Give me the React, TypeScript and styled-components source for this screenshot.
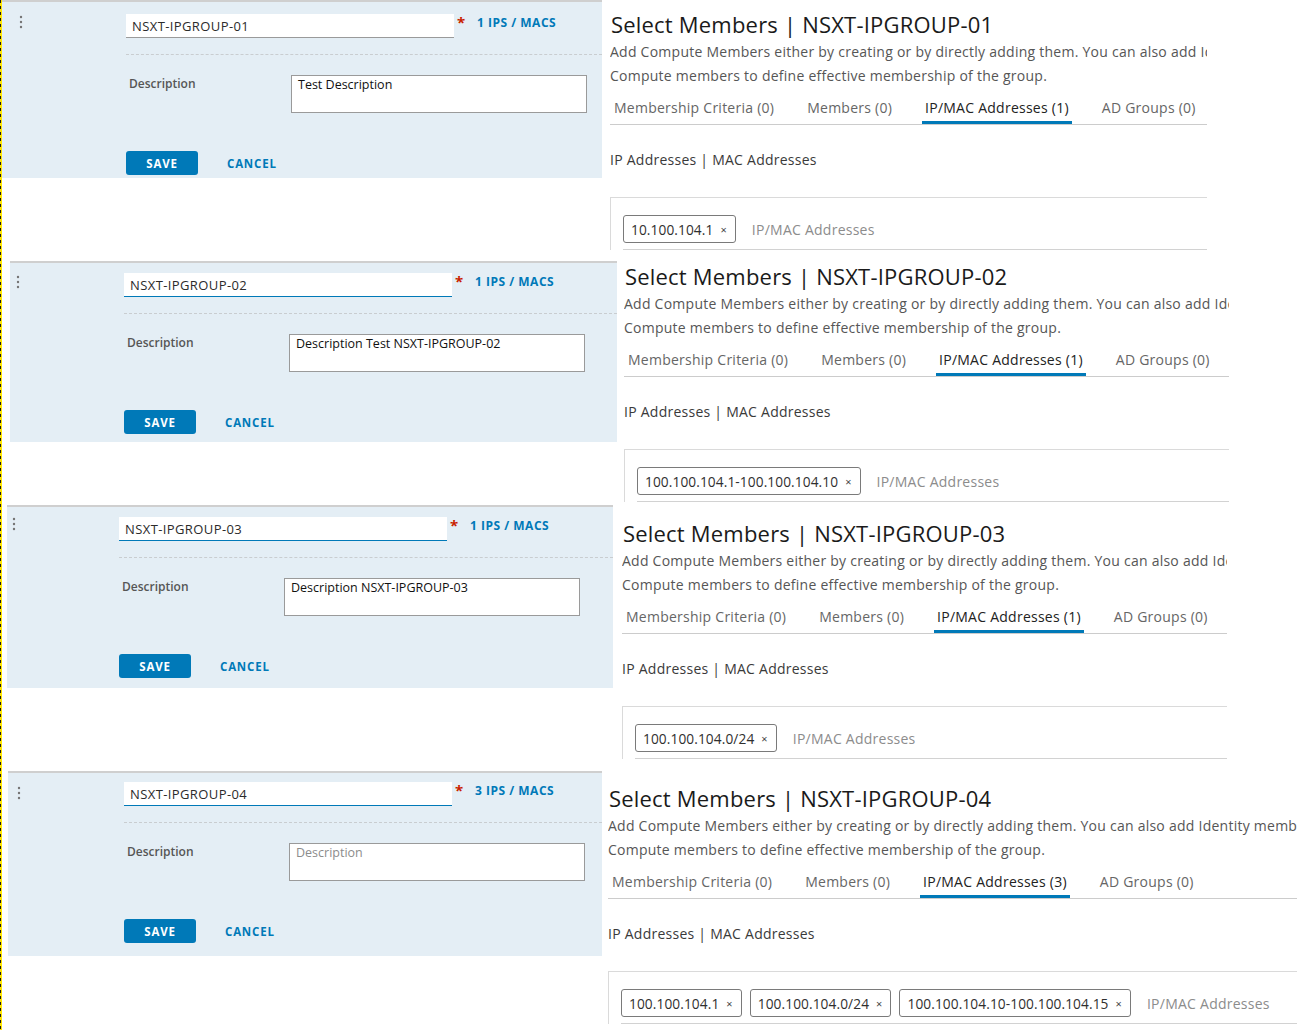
import React from "react";
import styled, { createGlobalStyle } from "styled-components";

const FONT = `"Open Sans", "Noto Sans", sans-serif`;
const BLUE = "#0079b8";

const Global = createGlobalStyle`
  html, body { margin: 0; padding: 0; background: #fff; overflow: hidden; }
  body { font-family: ${FONT}; }
  * { box-sizing: border-box; }
`;

const Page = styled.div`
  width: 1297px;
  height: 1030px;
  overflow: hidden;
  display: flex;
  flex-direction: column;
`;

const EdgeMarker = styled.div`
  position: fixed;
  left: 0;
  top: 0;
  width: 2px;
  height: 100%;
  background: repeating-linear-gradient(to bottom, #1a1a1a 0 3px, #ffe600 3px 6px);
  border-right: 1px solid #ffe600;
  z-index: 5;
`;

const Row = styled.div<{ $h: number }>`
  height: ${(p) => p.$h}px;
  flex: none;
  display: flex;
  align-items: flex-start;
  overflow: hidden;
`;

const EditPanel = styled.div<{ $x: number; $mt: number; $w: number; $h: number }>`
  margin-left: ${(p) => p.$x}px;
  margin-top: ${(p) => p.$mt}px;
  width: ${(p) => p.$w}px;
  height: ${(p) => p.$h}px;
  flex: none;
  background: #e4eef5;
  border-top: 2px solid #cfcfcf;
  display: flex;
`;

const KebabCell = styled.div<{ $w: number; $l: number; $t: number }>`
  width: ${(p) => p.$w}px;
  flex: none;
  padding-left: ${(p) => p.$l}px;
  padding-top: ${(p) => p.$t}px;
  color: #747474;
  line-height: 0;
`;

const Form = styled.div<{ $pt: number }>`
  flex: 1;
  min-width: 0;
  padding-top: ${(p) => p.$pt}px;
  display: flex;
  flex-direction: column;
`;

const NameRow = styled.div`
  display: flex;
  align-items: flex-start;
`;

const NameInput = styled.input<{ $focused: boolean }>`
  width: 328px;
  height: 24px;
  flex: none;
  border: none;
  border-bottom: 1px solid ${(p) => (p.$focused ? BLUE : "#9a9a9a")};
  background: #fff;
  padding: 0 0 0 6px;
  font-family: ${FONT};
  font-size: 13px;
  letter-spacing: 0.4px;
  color: #2b2b2b;
  outline: none;
`;

const Required = styled.span`
  margin-left: 3px;
  width: 20px;
  flex: none;
  color: #c92100;
  font-size: 15px;
  font-weight: 700;
  line-height: 14px;
  margin-top: 1px;
`;

const CountLink = styled.span`
  color: ${BLUE};
  font-size: 12px;
  font-weight: 700;
  letter-spacing: 0.5px;
  line-height: 16px;
  margin-top: 1px;
  white-space: nowrap;
`;

const DashedRule = styled.div`
  margin-top: 16px;
  border-top: 1px dashed #c9cdd0;
`;

const DescRow = styled.div`
  margin-top: 20px;
  display: flex;
  align-items: flex-start;
`;

const DescLabel = styled.div`
  width: 165px;
  flex: none;
  padding-left: 3px;
  font-size: 12px;
  font-weight: 600;
  color: #565656;
  line-height: 18px;
`;

const DescArea = styled.textarea`
  width: 296px;
  height: 38px;
  flex: none;
  resize: none;
  border: 1px solid #9a9a9a;
  background: #fff;
  padding: 1px 6px;
  font-family: ${FONT};
  font-size: 12.5px;
  line-height: 16px;
  color: #111;
  outline: none;
  &::placeholder {
    color: #8c8c8c;
  }
`;

const ButtonRow = styled.div`
  margin-top: 38px;
  display: flex;
  align-items: center;
`;

const SaveButton = styled.button`
  width: 72px;
  height: 24px;
  border: none;
  border-radius: 3px;
  background: ${BLUE};
  color: #fff;
  font-family: ${FONT};
  font-size: 11.5px;
  font-weight: 700;
  letter-spacing: 0.8px;
  padding: 0;
`;

const CancelButton = styled.button`
  margin-left: 29px;
  border: none;
  background: transparent;
  padding: 0;
  color: ${BLUE};
  font-family: ${FONT};
  font-size: 11.5px;
  font-weight: 700;
  letter-spacing: 0.8px;
`;

const MembersPanel = styled.div<{ $gap: number; $mt: number; $w: number }>`
  margin-left: ${(p) => p.$gap}px;
  margin-top: ${(p) => p.$mt}px;
  width: ${(p) => p.$w}px;
  flex: none;
  overflow: hidden;
  display: flex;
  flex-direction: column;
  font-size: 14px;
  letter-spacing: 0.25px;
`;

const Title = styled.div`
  margin-top: 10px;
  padding-left: 1px;
  font-size: 22px;
  letter-spacing: 0.2px;
  line-height: 28px;
  color: #1a1a1a;
  white-space: nowrap;
`;

const Lead = styled.div<{ $first?: boolean }>`
  margin-top: ${(p) => (p.$first ? 2 : 0)}px;
  line-height: 24px;
  color: #565656;
  white-space: nowrap;
`;

const TabBar = styled.div`
  display: flex;
  border-bottom: 1px solid #cccccc;
`;

const Tab = styled.div<{ $active: boolean }>`
  padding: 10px 3px 3px;
  margin-right: 27px;
  line-height: 20px;
  white-space: nowrap;
  color: ${(p) => (p.$active ? "#222" : "#666")};
  border-bottom: 3px solid ${(p) => (p.$active ? BLUE : "transparent")};
  &:first-child {
    margin-left: 1px;
  }
`;

const SectionLabel = styled.div`
  margin-top: 25px;
  line-height: 20px;
  color: #3a3a3a;
  white-space: nowrap;
`;

const AddressBox = styled.div`
  margin-top: 27px;
  border-top: 1px solid #dadada;
  border-left: 1px solid #dadada;
  padding: 17px 0 0 12px;
`;

const ChipRow = styled.div`
  display: flex;
  align-items: center;
  gap: 8px;
  padding-bottom: 6px;
  border-bottom: 1px solid #d2d2d2;
  white-space: nowrap;
`;

const Chip = styled.div`
  height: 28px;
  flex: none;
  display: flex;
  align-items: center;
  border: 1px solid #7a7a7a;
  border-radius: 3px;
  padding: 0 8px 0 7px;
  font-size: 13.7px;
  letter-spacing: 0.1px;
  color: #2f2f2f;
`;

const ChipClose = styled.span`
  margin-left: 7px;
  font-size: 11px;
  color: #444;
`;

const Placeholder = styled.span`
  margin-left: 8px;
  color: #8c8c8c;
`;

const Kebab = () => (
  <svg width="4" height="14" viewBox="0 0 4 14">
    <circle cx="2" cy="2" r="1.2" fill="currentColor" />
    <circle cx="2" cy="7" r="1.2" fill="currentColor" />
    <circle cx="2" cy="12" r="1.2" fill="currentColor" />
  </svg>
);

type RowData = {
  h: number;
  panel: { x: number; mt: number; w: number; h: number; pt: number; kl: number; kt: number; inputX: number; focused: boolean };
  right: { gap: number; mt: number; w: number };
  name: string;
  desc: string;
  chips: string[];
};

const rows: RowData[] = [
  {
    h: 252,
    panel: { x: 2, mt: 0, w: 600, h: 178, pt: 12, kl: 17, kt: 13, inputX: 126, focused: false },
    right: { gap: 8, mt: 0, w: 597 },
    name: "NSXT-IPGROUP-01",
    desc: "Test Description",
    chips: ["10.100.104.1"],
  },
  {
    h: 253,
    panel: { x: 10, mt: 9, w: 607, h: 181, pt: 10, kl: 6, kt: 12, inputX: 124, focused: true },
    right: { gap: 7, mt: 0, w: 605 },
    name: "NSXT-IPGROUP-02",
    desc: "Description Test NSXT-IPGROUP-02",
    chips: ["100.100.104.1-100.100.104.10"],
  },
  {
    h: 266,
    panel: { x: 7, mt: 0, w: 606, h: 183, pt: 10, kl: 5, kt: 10, inputX: 119, focused: true },
    right: { gap: 9, mt: 4, w: 605 },
    name: "NSXT-IPGROUP-03",
    desc: "Description NSXT-IPGROUP-03",
    chips: ["100.100.104.0/24"],
  },
  {
    h: 259,
    panel: { x: 8, mt: 0, w: 594, h: 185, pt: 9, kl: 9, kt: 13, inputX: 124, focused: true },
    right: { gap: 6, mt: 3, w: 689 },
    name: "NSXT-IPGROUP-04",
    desc: "",
    chips: ["100.100.104.1", "100.100.104.0/24", "100.100.104.10-100.100.104.15"],
  },
];

export default function App() {
  return (
    <Page>
      <Global />
      <EdgeMarker />
      {rows.map((r) => {
        const n = r.chips.length;
        const tabs = ["Membership Criteria (0)", "Members (0)", `IP/MAC Addresses (${n})`, "AD Groups (0)"];
        return (
          <Row key={r.name} $h={r.h}>
            <EditPanel $x={r.panel.x} $mt={r.panel.mt} $w={r.panel.w} $h={r.panel.h}>
              <KebabCell $w={r.panel.inputX - r.panel.x} $l={r.panel.kl} $t={r.panel.kt}>
                <Kebab />
              </KebabCell>
              <Form $pt={r.panel.pt}>
                <NameRow>
                  <NameInput readOnly value={r.name} $focused={r.panel.focused} />
                  <Required>*</Required>
                  <CountLink>{n} IPS / MACS</CountLink>
                </NameRow>
                <DashedRule />
                <DescRow>
                  <DescLabel>Description</DescLabel>
                  <DescArea readOnly value={r.desc} placeholder="Description" />
                </DescRow>
                <ButtonRow>
                  <SaveButton>SAVE</SaveButton>
                  <CancelButton>CANCEL</CancelButton>
                </ButtonRow>
              </Form>
            </EditPanel>
            <MembersPanel $gap={r.right.gap} $mt={r.right.mt} $w={r.right.w}>
              <Title>Select Members | {r.name}</Title>
              <Lead $first>
                Add Compute Members either by creating or by directly adding them. You can also add Identity members along with
              </Lead>
              <Lead>Compute members to define effective membership of the group.</Lead>
              <TabBar>
                {tabs.map((t, i) => (
                  <Tab key={t} $active={i === 2}>
                    {t}
                  </Tab>
                ))}
              </TabBar>
              <SectionLabel>IP Addresses | MAC Addresses</SectionLabel>
              <AddressBox>
                <ChipRow>
                  {r.chips.map((c) => (
                    <Chip key={c}>
                      {c}
                      <ChipClose>×</ChipClose>
                    </Chip>
                  ))}
                  <Placeholder>IP/MAC Addresses</Placeholder>
                </ChipRow>
              </AddressBox>
            </MembersPanel>
          </Row>
        );
      })}
    </Page>
  );
}
